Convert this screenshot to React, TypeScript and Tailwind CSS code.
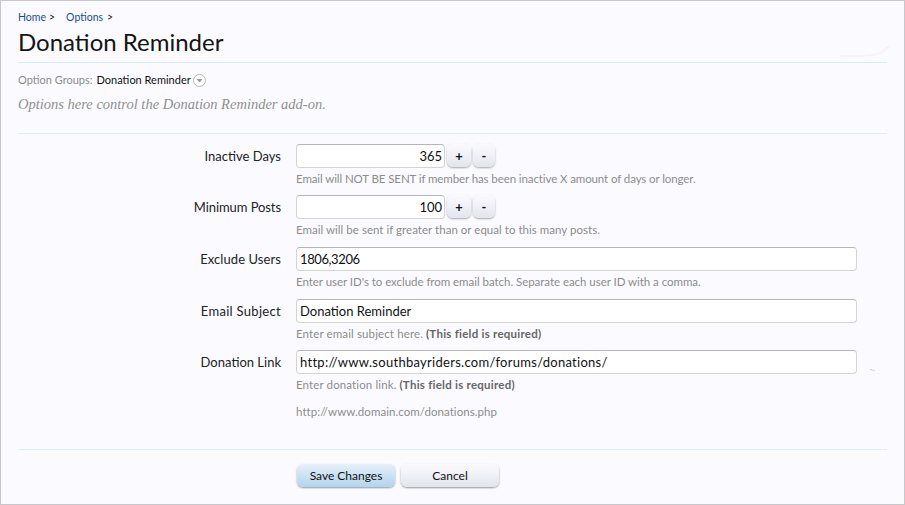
const sans = "font-['Lato','Noto_Sans',sans-serif]";

function Help({ children, className = "" }: { children: React.ReactNode; className?: string }) {
  return <div className={`mt-[3px] h-[16px] text-[11.5px] leading-[16px] text-[#8c8c8c] ${className}`}>{children}</div>;
}

function StepButton({ label, w }: { label: string; w: string }) {
  return (
    <button className={`h-[23px] ${w} rounded-[6px] bg-gradient-to-b from-[#fbfbfe] to-[#e4e4ef] text-[13px] font-bold leading-[20px] text-[#111] shadow-[0_1px_2px_rgba(0,0,0,0.35)]`}>
      {label}
    </button>
  );
}

function Field({ value, right, className = "" }: { value: string; right?: boolean; className?: string }) {
  return (
    <div
      className={`h-[24px] rounded-[4px] border border-[#d4d4d4] border-t-[#b5b5b5] bg-white px-[3px] text-[13px] leading-[22px] text-[#111] ${
        right ? "w-[149px] pr-[2px] text-right" : "w-[561px]"
      } ${className}`}
    >
      {value}
    </div>
  );
}

function Row({ label, children, className = "", labelClass = "" }: { label: string; children: React.ReactNode; className?: string; labelClass?: string }) {
  return (
    <div className={`flex ${className}`}>
      <div className={`w-[263px] shrink-0 text-right text-[13px] leading-[24px] text-[#222] ${labelClass}`}>{label}</div>
      <div className="ml-[15px] flex-1">{children}</div>
    </div>
  );
}

export default function App() {
  return (
    <div className={`${sans} relative flex h-[505px] w-[905px] flex-col border border-[#c8c8c8] bg-[#fbfbff] pl-[17px] pr-[17px]`}>
      <div className="mt-[9px] flex h-[14px] text-[10.5px] leading-[14px] text-[#222]">
        <span className="text-[#15508a]">Home</span>
        <span className="ml-[3px]">&gt;</span>
        <span className="ml-[11px] text-[#15508a]">Options</span>
        <span className="ml-[4px]">&gt;</span>
      </div>
      <h1 className="mt-[1px] h-[38px] border-b border-[#d6ecfb] text-[24px] font-normal leading-[34px] text-[#141414]">
        Donation Reminder
      </h1>
      <div className="mt-[9px] flex h-[16px] items-center text-[11px] leading-[16px]">
        <span className="text-[#8c8c8c]">Option Groups:</span>
        <span className="ml-[4px] text-[#111]">Donation Reminder</span>
        <svg className="ml-[2px]" width="13" height="13" viewBox="0 0 13 13">
          <circle cx="6.5" cy="6.5" r="6" fill="#fff" stroke="#b5b5b5" />
          <path d="M3.5 5h6l-3 3.5z" fill="#9a9a9a" />
        </svg>
      </div>
      <p className="mt-[7px] h-[18px] font-['Liberation_Serif',serif] text-[14.5px] italic leading-[18px] text-[#8f8f8f]">
        Options here control the Donation Reminder add-on.
      </p>
      <div className="mt-[20px] border-t border-[#dcecf8]" />
      <div className="pt-[10px]">
        <Row label="Inactive Days">
          <div className="flex">
            <Field value="365" right />
            <div className="ml-[2px] flex gap-[2px]">
              <StepButton label="+" w="w-[24px]" />
              <StepButton label="-" w="w-[22px]" />
            </div>
          </div>
          <Help className="tracking-[-0.1px]">Email will NOT BE SENT if member has been inactive X amount of days or longer.</Help>
        </Row>
        <Row label="Minimum Posts" className="mt-[8px]" labelClass="tracking-[-0.08px]">
          <div className="flex">
            <Field value="100" right />
            <div className="ml-[2px] flex gap-[2px]">
              <StepButton label="+" w="w-[24px]" />
              <StepButton label="-" w="w-[22px]" />
            </div>
          </div>
          <Help className="tracking-[0.03px]">Email will be sent if greater than or equal to this many posts.</Help>
        </Row>
        <Row label="Exclude Users" className="mt-[9px]" labelClass="tracking-[0.08px]">
          <Field value="1806,3206" className="tracking-[-0.4px]" />
          <Help className="tracking-[-0.04px]">Enter user ID's to exclude from email batch. Separate each user ID with a comma.</Help>
        </Row>
        <Row label="Email Subject" className="mt-[9px]" labelClass="tracking-[0.3px]">
          <Field value="Donation Reminder" />
          <Help>
            <span className="tracking-[0.12px]">Enter email subject here.</span>{" "}
            <b className="font-bold tracking-[0.25px] text-[#666]">(This field is required)</b>
          </Help>
        </Row>
        <Row label="Donation Link" className="mt-[8px]">
          <Field value="http://www.southbayriders.com/forums/donations/" className="tracking-[0.28px]" />
          <Help>
            <span className="tracking-[0.12px]">Enter donation link.</span>{" "}
            <b className="font-bold tracking-[0.25px] text-[#666]">(This field is required)</b>
          </Help>
          <div className="mt-[11px] h-[16px] text-[11.5px] leading-[16px] tracking-[0.05px] text-[#8c8c8c]">http://www.domain.com/donations.php</div>
        </Row>
      </div>
      <div className="mt-[29px] border-t border-[#dcecf8]" />
      <div className="ml-[279px] mt-[14px] flex gap-[6px]">
        <button className="h-[23px] w-[98px] rounded-[6px] bg-gradient-to-b from-[#e6f0f9] to-[#b2d4ec] text-[12px] leading-[22px] text-[#111] shadow-[0_1px_2px_rgba(0,0,0,0.4)]">
          Save Changes
        </button>
        <button className="h-[23px] w-[98px] rounded-[6px] bg-gradient-to-b from-[#fbfbfe] to-[#e4e4ef] text-[12px] leading-[22px] text-[#111] shadow-[0_1px_2px_rgba(0,0,0,0.4)]">
          Cancel
        </button>
      </div>
      <svg className="pointer-events-none absolute left-[839px] top-[39px]" width="52" height="20" viewBox="0 0 52 20" fill="none">
        <path d="M0 16 C20 16 34 16 40 13 C44 11 46 9 49 6" stroke="#f3f3f8" strokeWidth="2" />
      </svg>
      <svg className="pointer-events-none absolute left-[867px] top-[366px]" width="10" height="5" viewBox="0 0 10 5" fill="none">
        <path d="M2 2.5 L7 3.5" stroke="#cfd3dc" strokeWidth="1" />
      </svg>
    </div>
  );
}
